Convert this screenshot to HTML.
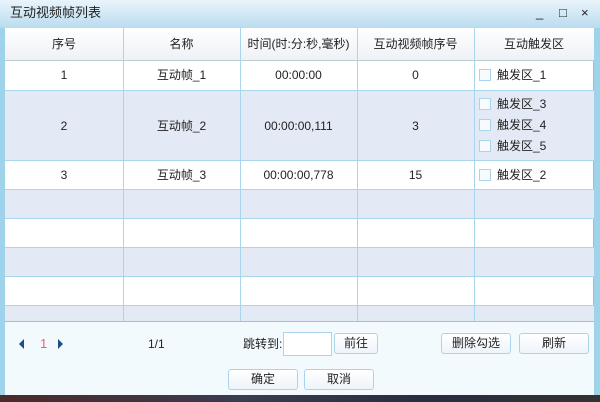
<!DOCTYPE html>
<html><head><meta charset="utf-8"><style>
*{margin:0;padding:0;box-sizing:border-box}
body{width:600px;height:402px;overflow:hidden;background:#9fd3ec;font-family:"Liberation Sans","Noto Sans CJK SC",sans-serif;font-size:12px;line-height:16px;color:#222;position:relative}
.a{position:absolute;line-height:16px;height:16px}
.title{left:0;top:0;width:600px;height:28px;background:linear-gradient(#eaf4fb,#b9dcf0);}
.title span{position:absolute;left:10px;top:5px;font-size:13px;color:#222;line-height:16px}
.tb{top:8px;font-size:9px;color:#778}
.tbl{left:5px;top:28px;width:589px;height:294px;background:#fff;border-right:1px solid #b8b8b8;border-bottom:1px solid #b8b8b8}
.row{position:absolute;left:0;width:589px;border-bottom:1px solid #a8d6ec}
.blue{background:#e4eaf5}
.hdr{background:linear-gradient(#fff,#eef1f6);border-bottom:1px solid #bcc}
.vl{position:absolute;top:0;width:1px;height:293px;background:#a8d6ec}
.c{position:absolute;text-align:center;font-size:12px;line-height:16px;height:16px}
.cb{position:absolute;width:12px;height:12px;border:1px solid #a9d4ec;background:#f8fbfe}
.foot{left:5px;top:322px;width:589px;height:73px;background:#f3fafd}
.btn{position:absolute;border:1px solid #a9d4ec;border-radius:3px;background:linear-gradient(#fff,#eef4fa);text-align:center;font-size:12px;line-height:19px;height:21px}
.bot{left:0;top:395px;width:600px;height:7px;background:linear-gradient(90deg,#4a2a2a,#3a3c50 40%,#2a2c40 70%,#333)}
</style></head><body>
<div class="a title" style="height:28px"><span>互动视频帧列表</span>
<span class="a tb" style="left:536px">_</span><span class="a tb" style="left:559px">□</span><span class="a tb" style="left:581px">×</span></div>
<div class="a tbl" style="height:294px">
<div class="row hdr" style="top:0;height:33px"></div>
<div class="row" style="top:33px;height:30px"></div>
<div class="row blue" style="top:63px;height:70px"></div>
<div class="row" style="top:133px;height:29px"></div>
<div class="row blue" style="top:162px;height:29px"></div>
<div class="row" style="top:191px;height:29px"></div>
<div class="row blue" style="top:220px;height:29px"></div>
<div class="row" style="top:249px;height:29px"></div>
<div class="row blue" style="top:278px;height:15px;border-bottom:none"></div>
<div class="vl" style="left:118px"></div><div class="vl" style="left:235px"></div><div class="vl" style="left:352px"></div><div class="vl" style="left:469px"></div>
<div class="c" style="left:0;width:118px;top:8px">序号</div>
<div class="c" style="left:118px;width:117px;top:8px">名称</div>
<div class="c" style="left:235px;width:117px;top:8px">时间(时:分:秒,毫秒)</div>
<div class="c" style="left:352px;width:117px;top:8px">互动视频帧序号</div>
<div class="c" style="left:469px;width:120px;top:8px">互动触发区</div>

<div class="c" style="left:0;width:118px;top:39px">1</div>
<div class="c" style="left:118px;width:117px;top:39px">互动帧_1</div>
<div class="c" style="left:235px;width:117px;top:39px">00:00:00</div>
<div class="c" style="left:352px;width:117px;top:39px">0</div>
<div class="cb" style="left:474px;top:41px"></div><div class="a" style="left:492px;top:39px">触发区_1</div>

<div class="c" style="left:0;width:118px;top:90px">2</div>
<div class="c" style="left:118px;width:117px;top:90px">互动帧_2</div>
<div class="c" style="left:235px;width:117px;top:90px">00:00:00,111</div>
<div class="c" style="left:352px;width:117px;top:90px">3</div>
<div class="cb" style="left:474px;top:70px"></div><div class="a" style="left:492px;top:68px">触发区_3</div>
<div class="cb" style="left:474px;top:91px"></div><div class="a" style="left:492px;top:89px">触发区_4</div>
<div class="cb" style="left:474px;top:112px"></div><div class="a" style="left:492px;top:110px">触发区_5</div>

<div class="c" style="left:0;width:118px;top:139px">3</div>
<div class="c" style="left:118px;width:117px;top:139px">互动帧_3</div>
<div class="c" style="left:235px;width:117px;top:139px">00:00:00,778</div>
<div class="c" style="left:352px;width:117px;top:139px">15</div>
<div class="cb" style="left:474px;top:141px"></div><div class="a" style="left:492px;top:139px">触发区_2</div>
</div>
<div class="a foot" style="height:73px">
<div class="a" style="left:14px;top:17px;width:0;height:0;border-top:5px solid transparent;border-bottom:5px solid transparent;border-right:5px solid #1f4f8a"></div>
<div class="a" style="left:35px;top:14px;color:#f06070;font-size:13px">1</div>
<div class="a" style="left:53px;top:17px;width:0;height:0;border-top:5px solid transparent;border-bottom:5px solid transparent;border-left:5px solid #1f4f8a"></div>
<div class="a" style="left:143px;top:14px">1/1</div>
<div class="a" style="left:238px;top:14px">跳转到:</div>
<div class="a" style="left:278px;top:10px;width:49px;height:24px;border:1px solid #a9d4ec;background:#fff"></div>
<div class="btn" style="left:329px;top:11px;width:44px">前往</div>
<div class="btn" style="left:436px;top:11px;width:70px">删除勾选</div>
<div class="btn" style="left:514px;top:11px;width:70px">刷新</div>
<div class="btn" style="left:223px;top:47px;width:70px">确定</div>
<div class="btn" style="left:299px;top:47px;width:70px">取消</div>
</div>
<div class="a bot" style="height:7px"></div>
</body></html>
